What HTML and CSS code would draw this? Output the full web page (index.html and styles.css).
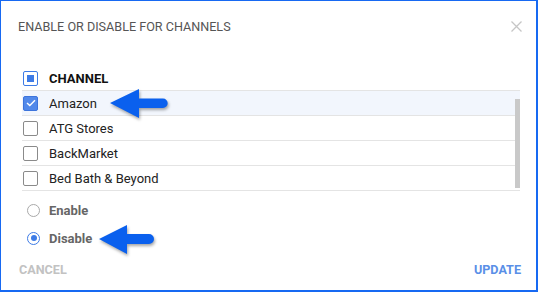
FILE: index.html
```html
<!DOCTYPE html>
<html lang="en">
<head>
    <meta charset="UTF-8">
    <meta name="viewport" content="width=device-width, initial-scale=1.0">
    <title>Enable or disable for channels</title>
    <link rel="stylesheet" href="styles.css">
</head>
<body>
    <div class="frame">
        <div class="dialog-head">
            <h2 class="dialog-title">Enable or disable for channels</h2>
            <svg class="close" width="11" height="11" viewBox="0 0 11 11">
                <path d="M0.5 0.5 L10.5 10.5 M10.5 0.5 L0.5 10.5" stroke="#c6c6c6" stroke-width="1.3" fill="none"/>
            </svg>
        </div>

        <div class="channels">
            <div class="row head-row">
                <span class="check partial"><span class="dot"></span></span>
                <span class="name">CHANNEL</span>
            </div>
            <div class="list">
                <div class="row selected">
                    <span class="check on">
                        <svg width="10" height="8" viewBox="0 0 10 8"><path d="M1 4 L3.8 6.6 L9 1.2" stroke="#fff" stroke-width="1.4" fill="none"/></svg>
                    </span>
                    <span class="name">Amazon</span>
                </div>
                <div class="row">
                    <span class="check"></span>
                    <span class="name">ATG Stores</span>
                </div>
                <div class="row">
                    <span class="check"></span>
                    <span class="name">BackMarket</span>
                </div>
                <div class="row">
                    <span class="check"></span>
                    <span class="name">Bed Bath &amp; Beyond</span>
                </div>
                <div class="scroll-thumb"></div>
            </div>
        </div>

        <div class="options">
            <label class="option"><span class="radio"></span>Enable</label>
            <label class="option"><span class="radio on"></span>Disable</label>
        </div>

        <div class="actions">
            <span class="btn cancel">Cancel</span>
            <span class="btn update">Update</span>
        </div>

        <!-- annotation arrows -->
        <svg class="arrow arrow-one" width="64" height="33" viewBox="0 0 64 33">
            <path d="M2 16 L31 2 L31 11.5 L55 11.5 A4.7 4.7 0 0 1 55 20.9 L31 20.9 L31 31 Z" fill="#0a60ee"/>
        </svg>
        <svg class="arrow arrow-two" width="62" height="33" viewBox="0 0 62 33">
            <path d="M2 16 L30 2 L30 11 L52 11 A5 5 0 0 1 52 21 L30 21 L30 31 Z" fill="#0a60ee"/>
        </svg>
    </div>
</body>
</html>
```

FILE: styles.css
```css
body {
    margin: 0;
    background: #fff;
    font-family: Roboto, "Liberation Sans", Arial, sans-serif;
}
.frame {
    position: relative;
    box-sizing: border-box;
    width: 538px;
    height: 292px;
    border: 1px solid #1769f2;
    border-right-width: 2px;
    border-bottom-width: 2px;
    background: #fff;
}
.dialog-head {
    display: flex;
    justify-content: space-between;
    align-items: center;
    padding: 16px 14px 0 17px;
    height: 18px;
}
.dialog-title {
    margin: 0;
    font-size: 12.6px;
    font-weight: 400;
    text-transform: uppercase;
    color: #555;
}
.close {
    display: block;
}
.channels {
    margin: 31px 16px 0 21px;
}
.row {
    display: flex;
    align-items: center;
    height: 24px;
    border-bottom: 1px solid #e4e4e4;
    font-size: 13px;
    color: #222;
}
.head-row .name {
    font-weight: 700;
    color: #111;
}
.row.selected {
    background: #f2f6fd;
}
.list {
    position: relative;
}
.check {
    box-sizing: border-box;
    width: 15px;
    height: 15px;
    border: 1px solid #8a8a8a;
    border-radius: 2px;
    margin-left: 1px;
    margin-right: 11px;
    display: flex;
    align-items: center;
    justify-content: center;
    background: #fff;
}
.check.partial {
    border: 1.5px solid #3d7be6;
}
.check.partial .dot {
    width: 7px;
    height: 7px;
    background: #3d7be6;
}
.check.on {
    border: 1px solid #3d74dc;
    background: #5289ea;
}
.check svg {
    display: block;
}
.scroll-thumb {
    position: absolute;
    right: 0;
    top: 8px;
    width: 5px;
    height: 89px;
    background: #c9c9c9;
}
.options {
    margin: 5px 0 0 26px;
}
.option {
    display: flex;
    align-items: center;
    height: 28px;
    font-size: 13px;
    font-weight: 700;
    color: #666;
}
.radio {
    box-sizing: border-box;
    width: 13px;
    height: 13px;
    border: 1.5px solid #a9a9a9;
    border-radius: 50%;
    margin-right: 9px;
    display: flex;
    align-items: center;
    justify-content: center;
}
.radio.on {
    border-color: #3d7be6;
}
.radio.on::after {
    content: "";
    width: 6px;
    height: 6px;
    border-radius: 50%;
    background: #3d7be6;
}
.actions {
    display: flex;
    justify-content: space-between;
    padding: 10px 15px 0 18px;
}
.btn {
    font-size: 12.6px;
    font-weight: 700;
    text-transform: uppercase;
}
.cancel {
    color: #c2c2c2;
}
.update {
    color: #5a8fe7;
}
.arrow {
    position: absolute;
    filter: drop-shadow(1px 2px 1.5px rgba(0,0,0,0.35));
}
.arrow-one {
    left: 107px;
    top: 86px;
}
.arrow-two {
    left: 96px;
    top: 222px;
}
```
